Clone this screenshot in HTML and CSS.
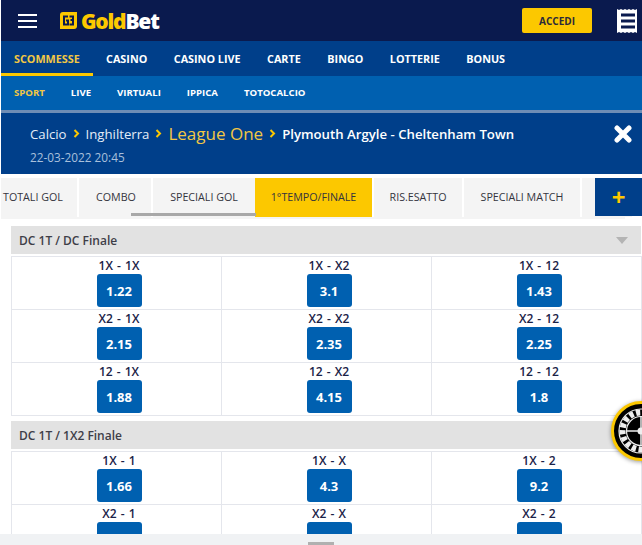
FILE: index.html
```html
<!DOCTYPE html>
<html lang="en">
<head>
  <meta charset="UTF-8" />
  <title>GoldBet</title>
  <link rel="stylesheet" href="styles.css">
</head>
<body>

  <div class="page">
    <header class="top-bar">
      <div class="burger"><span></span><span></span><span></span></div>
      <div class="logo">
        <svg class="logo-mark" width="17" height="17" viewBox="0 0 17 17">
          <path d="M3 0H17V14Q17 17 14 17H0V3Q0 0 3 0Z" fill="#fcc800"/>
          <path d="M8 4.5H4V12.5H8V8.5H6" fill="none" stroke="#0a1a4e" stroke-width="2"/>
          <path d="M9.5 4.5H13V8H10.5M13 8V12.5H9.5" fill="none" stroke="#0a1a4e" stroke-width="2"/>
        </svg>
        <span class="logo-text"><span class="logo-gold">Gold</span>Bet</span>
      </div>
      <button class="login-btn">ACCEDI</button>
      <svg class="coupon" width="22" height="24" viewBox="0 0 22 24">
        <path d="M0 0l2 1 2-1 2 1 2-1 2 1 2-1 2 1 2-1 2 1 2-1V24l-2-1-2 1-2-1-2 1-2-1-2 1-2-1-2 1-2-1-2 1Z" fill="#fff"/>
        <path d="M4 6H18M4 12H18M4 18H18" stroke="#0a1a4e" stroke-width="3"/>
      </svg>
    </header>

    <nav class="main-nav">
      <a class="active">SCOMMESSE</a>
      <a>CASINO</a>
      <a>CASINO LIVE</a>
      <a>CARTE</a>
      <a>BINGO</a>
      <a>LOTTERIE</a>
      <a>BONUS</a>
    </nav>

    <nav class="sub-nav">
      <a class="active">SPORT</a>
      <a>LIVE</a>
      <a>VIRTUALI</a>
      <a>IPPICA</a>
      <a>TOTOCALCIO</a>
    </nav>

    <section class="match-head">
      <div class="crumbs">
        <span>Calcio</span>
        <svg class="chev" width="7" height="9" viewBox="0 0 7 9"><path d="M1.5 1L5 4.5L1.5 8" fill="none" stroke="#fcc800" stroke-width="2"/></svg>
        <span>Inghilterra</span>
        <svg class="chev" width="7" height="9" viewBox="0 0 7 9"><path d="M1.5 1L5 4.5L1.5 8" fill="none" stroke="#fcc800" stroke-width="2"/></svg>
        <span class="league">League One</span>
        <svg class="chev" width="7" height="9" viewBox="0 0 7 9"><path d="M1.5 1L5 4.5L1.5 8" fill="none" stroke="#fcc800" stroke-width="2"/></svg>
        <strong>Plymouth Argyle - Cheltenham Town</strong>
      </div>
      <div class="match-date">22-03-2022 20:45</div>
      <svg class="close-icon" width="18" height="18" viewBox="0 0 18 18">
        <path d="M3 3L15 15M15 3L3 15" stroke="#fff" stroke-width="5" stroke-linecap="round"/>
      </svg>
    </section>

    <div class="tabs">
      <a class="tab tab-first">TOTALI GOL</a>
      <a class="tab tab-combo">COMBO</a>
      <a class="tab tab-spec">SPECIALI GOL</a>
      <a class="tab tab-active">1°TEMPO/FINALE</a>
      <a class="tab tab-ris">RIS.ESATTO</a>
      <a class="tab tab-match">SPECIALI MATCH</a>
      <a class="tab tab-rest"></a>
      <a class="tab-plus">+</a>
      <div class="tab-track"></div>
      <div class="tab-scroll"></div>
    </div>

    <div class="market-head">
      <span>DC 1T / DC Finale</span>
      <b class="caret"></b>
    </div>
    <div class="odds-grid">
      <div class="odd"><span>1X - 1X</span><button>1.22</button></div>
      <div class="odd"><span>1X - X2</span><button>3.1</button></div>
      <div class="odd"><span>1X - 12</span><button>1.43</button></div>
      <div class="odd"><span>X2 - 1X</span><button>2.15</button></div>
      <div class="odd"><span>X2 - X2</span><button>2.35</button></div>
      <div class="odd"><span>X2 - 12</span><button>2.25</button></div>
      <div class="odd"><span>12 - 1X</span><button>1.88</button></div>
      <div class="odd"><span>12 - X2</span><button>4.15</button></div>
      <div class="odd"><span>12 - 12</span><button>1.8</button></div>
    </div>

    <div class="market-head">
      <span>DC 1T / 1X2 Finale</span>
    </div>
    <div class="odds-grid">
      <div class="odd"><span>1X - 1</span><button>1.66</button></div>
      <div class="odd"><span>1X - X</span><button>4.3</button></div>
      <div class="odd"><span>1X - 2</span><button>9.2</button></div>
      <div class="odd"><span>X2 - 1</span><button></button></div>
      <div class="odd"><span>X2 - X</span><button></button></div>
      <div class="odd"><span>X2 - 2</span><button></button></div>
    </div>
  </div>

  <div class="bottom-bar"><span></span></div>

  <svg class="roulette" width="60" height="60" viewBox="0 0 60 60">
    <circle cx="30" cy="30" r="28.5" fill="#000" stroke="#fcc800" stroke-width="3"/>
    <circle cx="30" cy="30" r="18.5" fill="none" stroke="#eee" stroke-width="6" stroke-dasharray="4.2 2.6"/>
    <circle cx="30" cy="30" r="22" fill="none" stroke="#eee" stroke-width="1.2"/>
    <circle cx="30" cy="30" r="14.5" fill="none" stroke="#eee" stroke-width="1.2"/>
    <circle cx="30" cy="30" r="3.5" fill="#eee"/>
    <path d="M30 15V45M15 30H45" stroke="#eee" stroke-width="1.5"/>
  </svg>

</body>
</html>
```

FILE: styles.css
```css
html,
body {
  margin: 0;
  height: 545px;
  overflow: hidden;
}

body {
  position: relative;
  font-family: 'Open Sans', sans-serif;
  background: #fff;
  color: #1a2247;
}

.page {
  height: 534px;
  padding-left: 1px;
  overflow: hidden;
}

.top-bar {
  display: flex;
  align-items: center;
  height: 41px;
  background: #0a1a4e;
}

.burger {
  display: flex;
  flex-direction: column;
  gap: 4px;
  width: 19px;
  margin-left: 17px;
}

.burger span {
  height: 2px;
  background: #fff;
}

.logo {
  display: flex;
  align-items: center;
  gap: 4px;
  margin-left: 23px;
}

.logo-text {
  font-size: 21px;
  font-weight: 800;
  letter-spacing: -1.2px;
  color: #fff;
}

.logo-gold {
  color: #fcc800;
}

.login-btn {
  width: 70px;
  height: 25px;
  margin-left: auto;
  padding: 0;
  border: none;
  border-radius: 2px;
  background: #fcc800;
  color: #2c2a3a;
  font-family: inherit;
  font-size: 10px;
  font-weight: 700;
}

.coupon {
  margin: 0 3px 0 25px;
}

.main-nav {
  display: flex;
  height: 35px;
  background: #003f8a;
}

.main-nav a {
  padding: 0 13.25px;
  font-size: 10.8px;
  font-weight: 700;
  line-height: 36px;
  color: #fff;
}

.main-nav a.active {
  padding: 0 13px;
  color: #f2c744;
  border-bottom: 3px solid #fcc800;
  height: 32px;
}

.sub-nav {
  display: flex;
  height: 34px;
  background: #0060b0;
}

.sub-nav a {
  padding: 0 13px;
  font-size: 9.6px;
  font-weight: 700;
  line-height: 34px;
  color: #fff;
}

.sub-nav a.active {
  color: #f2c744;
}

.match-head {
  position: relative;
  box-sizing: border-box;
  height: 64px;
  padding: 7px 0 0 29px;
  border-top: 3px solid #6f8db5;
  background: #003f8a;
  color: #e4edf7;
}

.crumbs {
  display: flex;
  align-items: center;
  height: 27px;
  font-size: 13.2px;
  white-space: nowrap;
}

.chev {
  margin: 0 6px 1px 6px;
}

.crumbs .league {
  font-size: 17px;
  color: #f2c744;
}

.crumbs strong {
  font-size: 13.2px;
  font-weight: 600;
  color: #fff;
}

.match-date {
  margin-top: 1px;
  font-size: 11.8px;
  line-height: 18px;
  color: #a9c0dc;
}

.close-icon {
  position: absolute;
  top: 12px;
  right: 10px;
}

.tabs {
  position: relative;
  display: flex;
  gap: 2px;
  height: 52px;
  padding-top: 4px;
  box-sizing: border-box;
  overflow: hidden;
}

.tab {
  box-sizing: border-box;
  height: 39px;
  background: #f4f4f4;
  font-size: 10.7px;
  line-height: 38px;
  text-align: center;
  color: #34343e;
  white-space: nowrap;
}

.tab-first { width: 76px; padding-left: 2px; text-align: left; }
.tab-combo { width: 72px; padding-left: 2px; }
.tab-spec { width: 102px; }
.tab-active { width: 117px; margin-left: -2px; background: #fcc800; }
.tab-ris { width: 88px; }
.tab-match { width: 116px; }
.tab-rest { width: 50px; }

.tab-plus {
  position: absolute;
  top: 4px;
  right: 0;
  width: 47px;
  height: 38px;
  background: #003f8a;
  color: #fcc800;
  font-size: 24px;
  font-weight: 700;
  line-height: 37px;
  text-align: center;
}

.tab-track {
  position: absolute;
  left: 0;
  top: 43px;
  width: 624px;
  height: 2px;
  background: #f4f4f4;
}

.tab-scroll {
  position: absolute;
  left: 130px;
  top: 39px;
  width: 125px;
  height: 3px;
  background: #a8a8a8;
}

.market-head {
  display: flex;
  align-items: center;
  justify-content: space-between;
  box-sizing: border-box;
  height: 28px;
  margin: 0 1px 0 10px;
  padding: 0 13px 0 8px;
  background: #e2e2e2;
  font-size: 12px;
  font-weight: 600;
  color: #3e3e48;
}

.caret {
  border-left: 6px solid transparent;
  border-right: 6px solid transparent;
  border-top: 7px solid #b4b4b4;
}

.odds-grid {
  display: grid;
  grid-template-columns: 210px 210px 210px;
  margin: 2px 0 5px 10px;
  border-top: 1px solid #e4e6ec;
  border-left: 1px solid #e4e6ec;
}

.odd {
  box-sizing: border-box;
  display: flex;
  flex-direction: column;
  align-items: center;
  height: 53px;
  padding-left: 5px;
  border-right: 1px solid #e4e6ec;
  border-bottom: 1px solid #e4e6ec;
}

.odd span {
  font-size: 12px;
  font-weight: 600;
  line-height: 17px;
  word-spacing: 1px;
  color: #1a2247;
}

.odd button {
  width: 45px;
  height: 33px;
  padding: 0;
  border: none;
  border-radius: 3px;
  background: #0060b0;
  color: #fff;
  font-family: inherit;
  font-size: 13px;
  font-weight: 700;
}

.bottom-bar {
  display: flex;
  justify-content: center;
  height: 11px;
  background: #f0f2f4;
}

.bottom-bar span {
  width: 26px;
  height: 3px;
  margin-top: 8px;
  background: #b0b0b0;
}

.roulette {
  position: absolute;
  left: 611px;
  top: 401px;
  filter: drop-shadow(0 1px 2px rgba(0, 0, 0, 0.4));
}
```
